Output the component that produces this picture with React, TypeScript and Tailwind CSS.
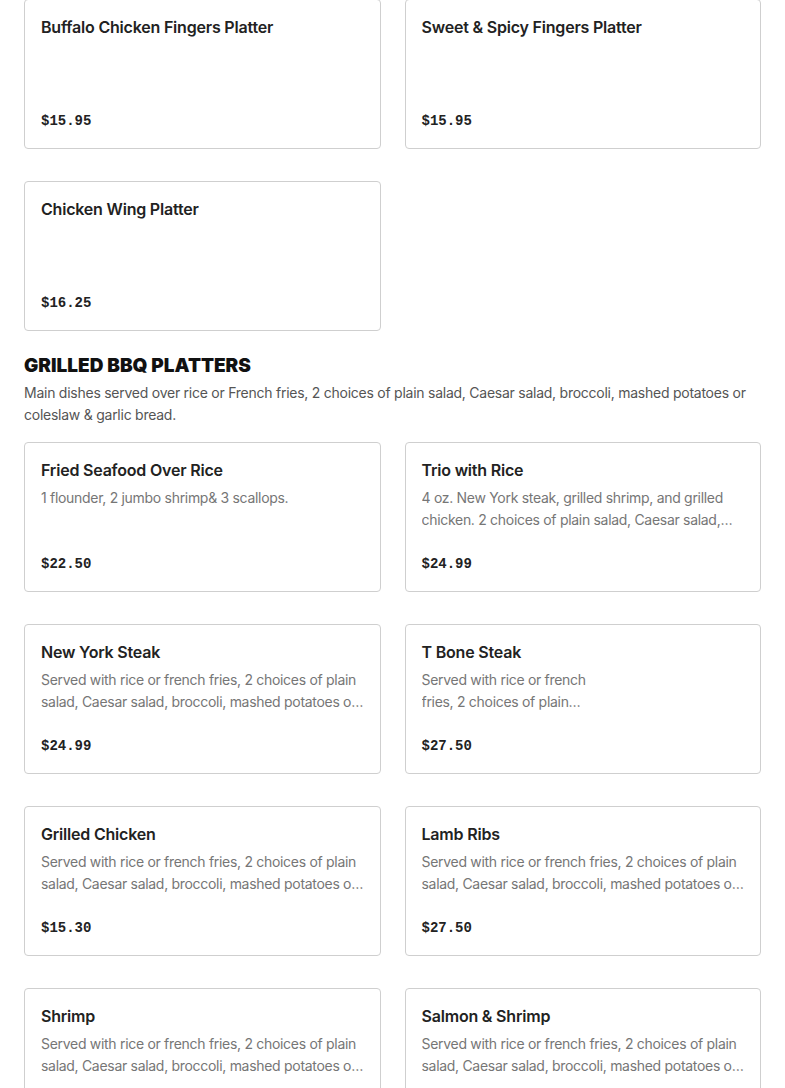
import React from "react";

type Item = {
  name: string;
  price: string;
  description?: string;
  narrow?: boolean;
};

const SERVED =
  "Served with rice or french fries, 2 choices of plain salad, Caesar salad, broccoli, mashed potatoes or coleslaw & garlic bread.";

const platters: Item[] = [
  { name: "Buffalo Chicken Fingers Platter", price: "$15.95" },
  { name: "Sweet & Spicy Fingers Platter", price: "$15.95" },
  { name: "Chicken Wing Platter", price: "$16.25" },
];

const bbq: Item[] = [
  {
    name: "Fried Seafood Over Rice",
    price: "$22.50",
    description: "1 flounder, 2 jumbo shrimp& 3 scallops.",
  },
  {
    name: "Trio with Rice",
    price: "$24.99",
    description:
      "4 oz. New York steak, grilled shrimp, and grilled chicken. 2 choices of plain salad, Caesar salad, broccoli, mashed potatoes or coleslaw & garlic bread.",
  },
  { name: "New York Steak", price: "$24.99", description: SERVED },
  { name: "T Bone Steak", price: "$27.50", description: SERVED, narrow: true },
  { name: "Grilled Chicken", price: "$15.30", description: SERVED },
  { name: "Lamb Ribs", price: "$27.50", description: SERVED },
  { name: "Shrimp", price: "$19.95", description: SERVED },
  { name: "Salmon & Shrimp", price: "$26.95", description: SERVED },
];

const sans = "font-['Inter','Noto_Sans',sans-serif]";

function MenuCard({ item }: { item: Item }) {
  return (
    <div className="h-[150px] flex flex-col rounded-[4px] border border-[#cfcfcf] bg-white px-4 pt-[15px] pb-[17px]">
      <h3 className="text-[16px] leading-6 font-semibold text-[#222] tracking-[-0.2px]">
        {item.name}
      </h3>
      {item.description && (
        <p
          className={
            "mt-[5px] text-[14px] leading-[22px] text-[#767676] tracking-[-0.3px] line-clamp-2 " +
            (item.narrow ? "max-w-[172px]" : "")
          }
        >
          {item.description}
        </p>
      )}
      <div className="mt-auto font-['Liberation_Mono',monospace] font-bold text-[14px] leading-5 text-[#222]">
        {item.price}
      </div>
    </div>
  );
}

export default function App() {
  return (
    <div className={`bg-white min-h-screen px-6 ${sans}`}>
      <div className="-mt-[1px] grid grid-cols-2 gap-x-6 gap-y-8">
        {platters.map((p) => (
          <MenuCard key={p.name} item={p} />
        ))}
      </div>

      <section className="pt-[23px]">
        <h2 className="text-[19px] leading-6 font-black uppercase text-[#111]">
          Grilled BBQ Platters
        </h2>
        <p className="mt-[4px] text-[14px] leading-[22px] text-[#555] tracking-[-0.25px]">
          Main dishes served over rice or French fries, 2 choices of plain salad, Caesar salad,
          broccoli, mashed potatoes or coleslaw &amp; garlic bread.
        </p>
        <div className="mt-4 grid grid-cols-2 gap-x-6 gap-y-8 pb-8">
          {bbq.map((p) => (
            <MenuCard key={p.name} item={p} />
          ))}
        </div>
      </section>
    </div>
  );
}
